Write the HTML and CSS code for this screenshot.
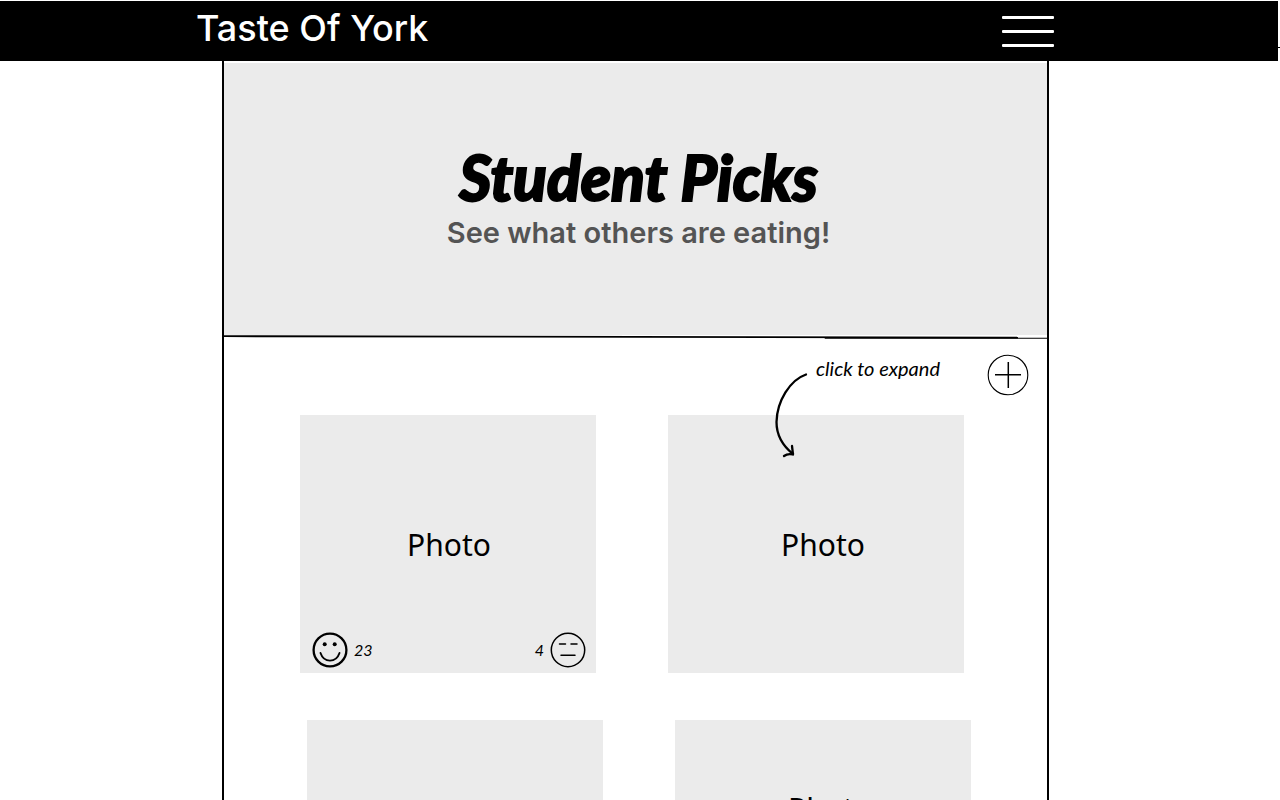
FILE: index.html
```html
<!DOCTYPE html>
<html lang="en">
<head>
<meta charset="utf-8">
<meta name="viewport" content="width=device-width, initial-scale=1">
<title>Taste Of York</title>
<link rel="stylesheet" href="styles.css">
</head>
<body>
<header class="topbar">
  <a class="brand" href="#">Taste Of York</a>
  <button class="menu" type="button" aria-label="Menu">
    <span class="menu-line"></span>
    <span class="menu-line"></span>
    <span class="menu-line"></span>
  </button>
  <span class="edge-tick"></span>
</header>
<main class="panel">
  <section class="hero">
    <h1 class="title">Student Picks</h1>
    <p class="subtitle">See what others are eating!</p>
  </section>
  <svg class="divider" viewBox="0 0 822 4" preserveAspectRatio="none" aria-hidden="true">
    <path d="M0 1.200L793 2.600" stroke="#000" stroke-width="1.800"/>
    <path d="M600 3.300H822" stroke="#000" stroke-width="1.100"/>
  </svg>
  <div class="toolbar">
    <p class="hint">click to expand
      <svg class="arrow" viewBox="0 0 36 88" aria-hidden="true">
        <g fill="none" stroke="#000" stroke-width="2.300" stroke-linecap="round" stroke-linejoin="round">
          <path d="M32 4.500C16 10 3 31 2.500 52C2.500 66 9 76 19 84"/>
          <path d="M18 76L19 84.500C15 83.500 12 84.500 10 86"/>
        </g>
      </svg>
    </p>
    <button class="add" type="button" aria-label="Add a photo">
      <svg class="icon" viewBox="0 0 42 42" aria-hidden="true">
        <g fill="none" stroke="#000">
          <circle cx="21" cy="21" r="19.800" stroke-width="1.100"/>
          <path d="M8 20.800H34M21.300 8V34" stroke-width="1.500"/>
        </g>
      </svg>
    </button>
  </div>
  <section class="row">
    <article class="card">
      <span class="photo">Photo</span>
      <div class="votes">
        <button class="vote" type="button" aria-label="Like, 23">
          <svg class="face" viewBox="0 0 36 36" aria-hidden="true">
            <circle cx="18" cy="18" r="16.400" fill="none" stroke="#000" stroke-width="2.300"/>
            <circle cx="12.700" cy="12.300" r="2"/><circle cx="22.700" cy="12.300" r="2"/>
            <path d="M8.500 21C12 31.200 24 31.200 27.500 21" fill="none" stroke="#000" stroke-width="1.900" stroke-linecap="round"/>
          </svg>
          <span>23</span>
        </button>
        <button class="vote" type="button" aria-label="Indifferent, 4">
          <span>4</span>
          <svg class="face" viewBox="0 0 36 36" aria-hidden="true">
            <g fill="none" stroke="#000" stroke-width="1.500" stroke-linecap="round">
              <circle cx="18" cy="18" r="16.700"/>
              <path d="M9.500 12H15.500M21 12H27M11 23.300H25"/>
            </g>
          </svg>
        </button>
      </div>
    </article>
    <article class="card card-wide"><span class="photo">Photo</span></article>
  </section>
  <section class="row row-shifted">
    <article class="card"></article>
    <article class="card card-high"><span class="photo">Photo</span></article>
  </section>
</main>
</body>
</html>
```
FILE: styles.css
```css
* {
  box-sizing: border-box;
}

body {
  margin: 0;
  background: #fff;
  color: #000;
  font-family: "Noto Sans", sans-serif;
}

button {
  padding: 0;
  border: 0;
  background: none;
  color: inherit;
  font: inherit;
  cursor: pointer;
}

.topbar {
  position: relative;
  display: flex;
  align-items: center;
  justify-content: space-between;
  height: 60px;
  margin: 1px 2px 0 0;
  padding: 0 224px 0 196px;
  background: #000;
}

.brand {
  padding-bottom: 6px;
  color: #fff;
  font: 500 36px/44px Inter, sans-serif;
  text-decoration: none;
}

.menu {
  display: flex;
  flex-direction: column;
  gap: 11px;
  width: 52px;
}

.menu-line {
  height: 3px;
  border-radius: 1px;
  background: #fff;
}

.edge-tick {
  position: absolute;
  right: -2px;
  bottom: 13px;
  width: 2px;
  height: 1px;
  background: #000;
}

.panel {
  margin: 0 231px 0 222px;
  border: solid #000;
  border-width: 0 2px;
}

.hero {
  height: 274px;
  padding: 76px 0 0 6px;
  border-top: 2px solid #fff;
  background: #ebebeb;
  text-align: center;
}

.title {
  margin: 0;
  font: italic 900 62px/76px Lato, sans-serif;
  -webkit-text-stroke: 2px #000;
  stroke-linejoin: round;
}

.subtitle {
  margin: 0;
  color: #545454;
  font: 600 29px/36px Inter, sans-serif;
}

.divider {
  display: block;
  width: 100%;
  height: 4px;
}

.toolbar {
  display: flex;
  align-items: flex-start;
  justify-content: flex-end;
  gap: 47px;
  height: 76px;
  padding: 15px 18px 0 0;
}

.hint {
  position: relative;
  margin: 0;
  font: italic 400 20px/28px Lato, sans-serif;
}

.arrow {
  position: absolute;
  top: 16px;
  left: -42px;
  width: 36px;
  height: 88px;
}

.add,
.icon {
  display: block;
  width: 42px;
  height: 42px;
}

.row {
  display: grid;
  grid-template-columns: 1fr 1fr;
  gap: 72px;
  padding: 0 83px 47px 76px;
}

.row-shifted {
  padding: 0 76px 47px 83px;
}

.card {
  display: flex;
  flex-direction: column;
  justify-content: space-between;
  height: 258px;
  padding: 109px 10px 5px 12px;
  background: #ebebeb;
}

.card-wide {
  padding-left: 24px;
}

.card-high {
  padding-top: 68px;
  padding-left: 24px;
}

.photo {
  font-size: 30px;
  line-height: 42px;
  text-align: center;
}

.votes {
  display: flex;
  justify-content: space-between;
}

.vote {
  display: flex;
  align-items: center;
  gap: 6px;
  font: italic 400 16px/32px Lato, sans-serif;
}

.face {
  width: 36px;
  height: 36px;
}
```
